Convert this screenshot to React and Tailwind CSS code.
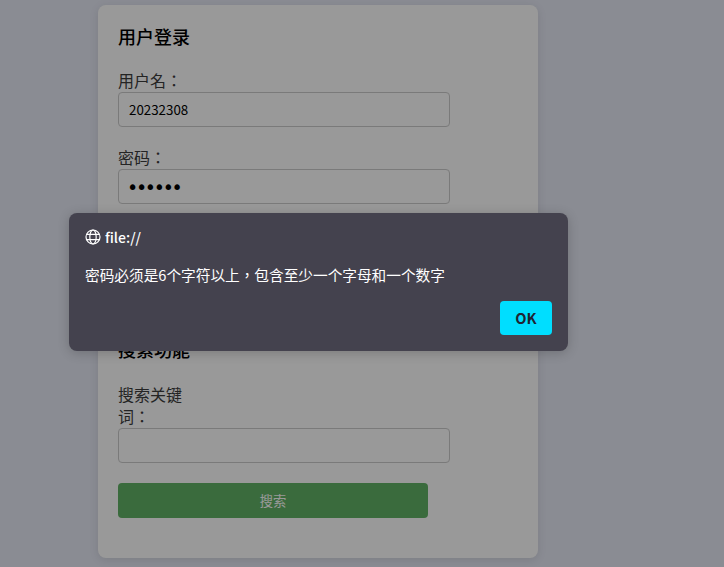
const fontStack = { fontFamily: '"Noto Sans CJK TC", sans-serif' }

function GlobeIcon() {
  return (
    <svg width="16" height="16" viewBox="0 0 16 16" fill="none" stroke="currentColor" strokeWidth="1.2">
      <circle cx="8" cy="8" r="7" />
      <ellipse cx="8" cy="8" rx="3.2" ry="7" />
      <path d="M1.6 5.4h12.8M1.6 10.6h12.8" />
    </svg>
  )
}

function Field({ label, value, type = 'text' }) {
  const isPassword = type === 'password'
  return (
    <div className="mb-5">
      <label className="block w-20 -mt-px mb-px text-base leading-[22px] text-[#3c3c3c]">{label}</label>
      <input
        type={type}
        defaultValue={value}
        className={`block w-[332px] h-[35px] text-black bg-white border border-[#ccc] rounded-[4px] outline-none ${
          isPassword ? "pl-2 pr-2.5 text-[19px] tracking-[-2.3px] font-['DejaVu_Sans']" : 'px-2.5 text-[13.33px]'
        }`}
      />
    </div>
  )
}

function SubmitButton({ children }) {
  return (
    <button className="block w-[310px] h-[35px] text-[13.33px] text-white bg-[#62b366] rounded-[4px]">
      {children}
    </button>
  )
}

export default function App() {
  return (
    <div className="relative h-[567px] overflow-hidden bg-[#e6e9f5]" style={fontStack}>
      <div className="ml-[98px] mt-[5px] w-[440px] h-[553px] p-5 bg-white rounded-lg shadow-[0_2px_10px_rgba(0,0,0,0.1)]">
        <h2 className="h-[25px] mb-5 text-lg leading-[23px] font-medium text-black">用户登录</h2>
        <Field label="用户名：" value="20232308" />
        <Field label="密码：" value="123456" type="password" />
        <SubmitButton>登录</SubmitButton>

        <h2 className="h-[25px] mt-[79px] mb-[21px] text-lg leading-[23px] font-medium text-black">搜索功能</h2>
        <Field label="搜索关键词：" value="" />
        <SubmitButton>搜索</SubmitButton>
      </div>

      {/* alert backdrop + dialog */}
      <div className="absolute inset-0 bg-black/40" />
      <div className="absolute left-[69px] top-[213px] w-[499px] h-[138px] px-4 pt-[14px] bg-[#44424e] rounded-lg shadow-[0_2px_12px_rgba(0,0,0,0.2)] text-white">
        <div className="flex items-center gap-1 h-[20px] text-sm font-medium">
          <GlobeIcon />
          <span>file://</span>
        </div>
        <p className="mt-[18px] text-[14.67px] leading-5">密码必须是6个字符以上，包含至少一个字母和一个数字</p>
        <div className="flex justify-end mt-4">
          <button className="w-[52px] h-[34px] text-[14.67px] font-semibold text-[#1f2433] bg-[#00deff] rounded-[4px]">OK</button>
        </div>
      </div>
    </div>
  )
}
